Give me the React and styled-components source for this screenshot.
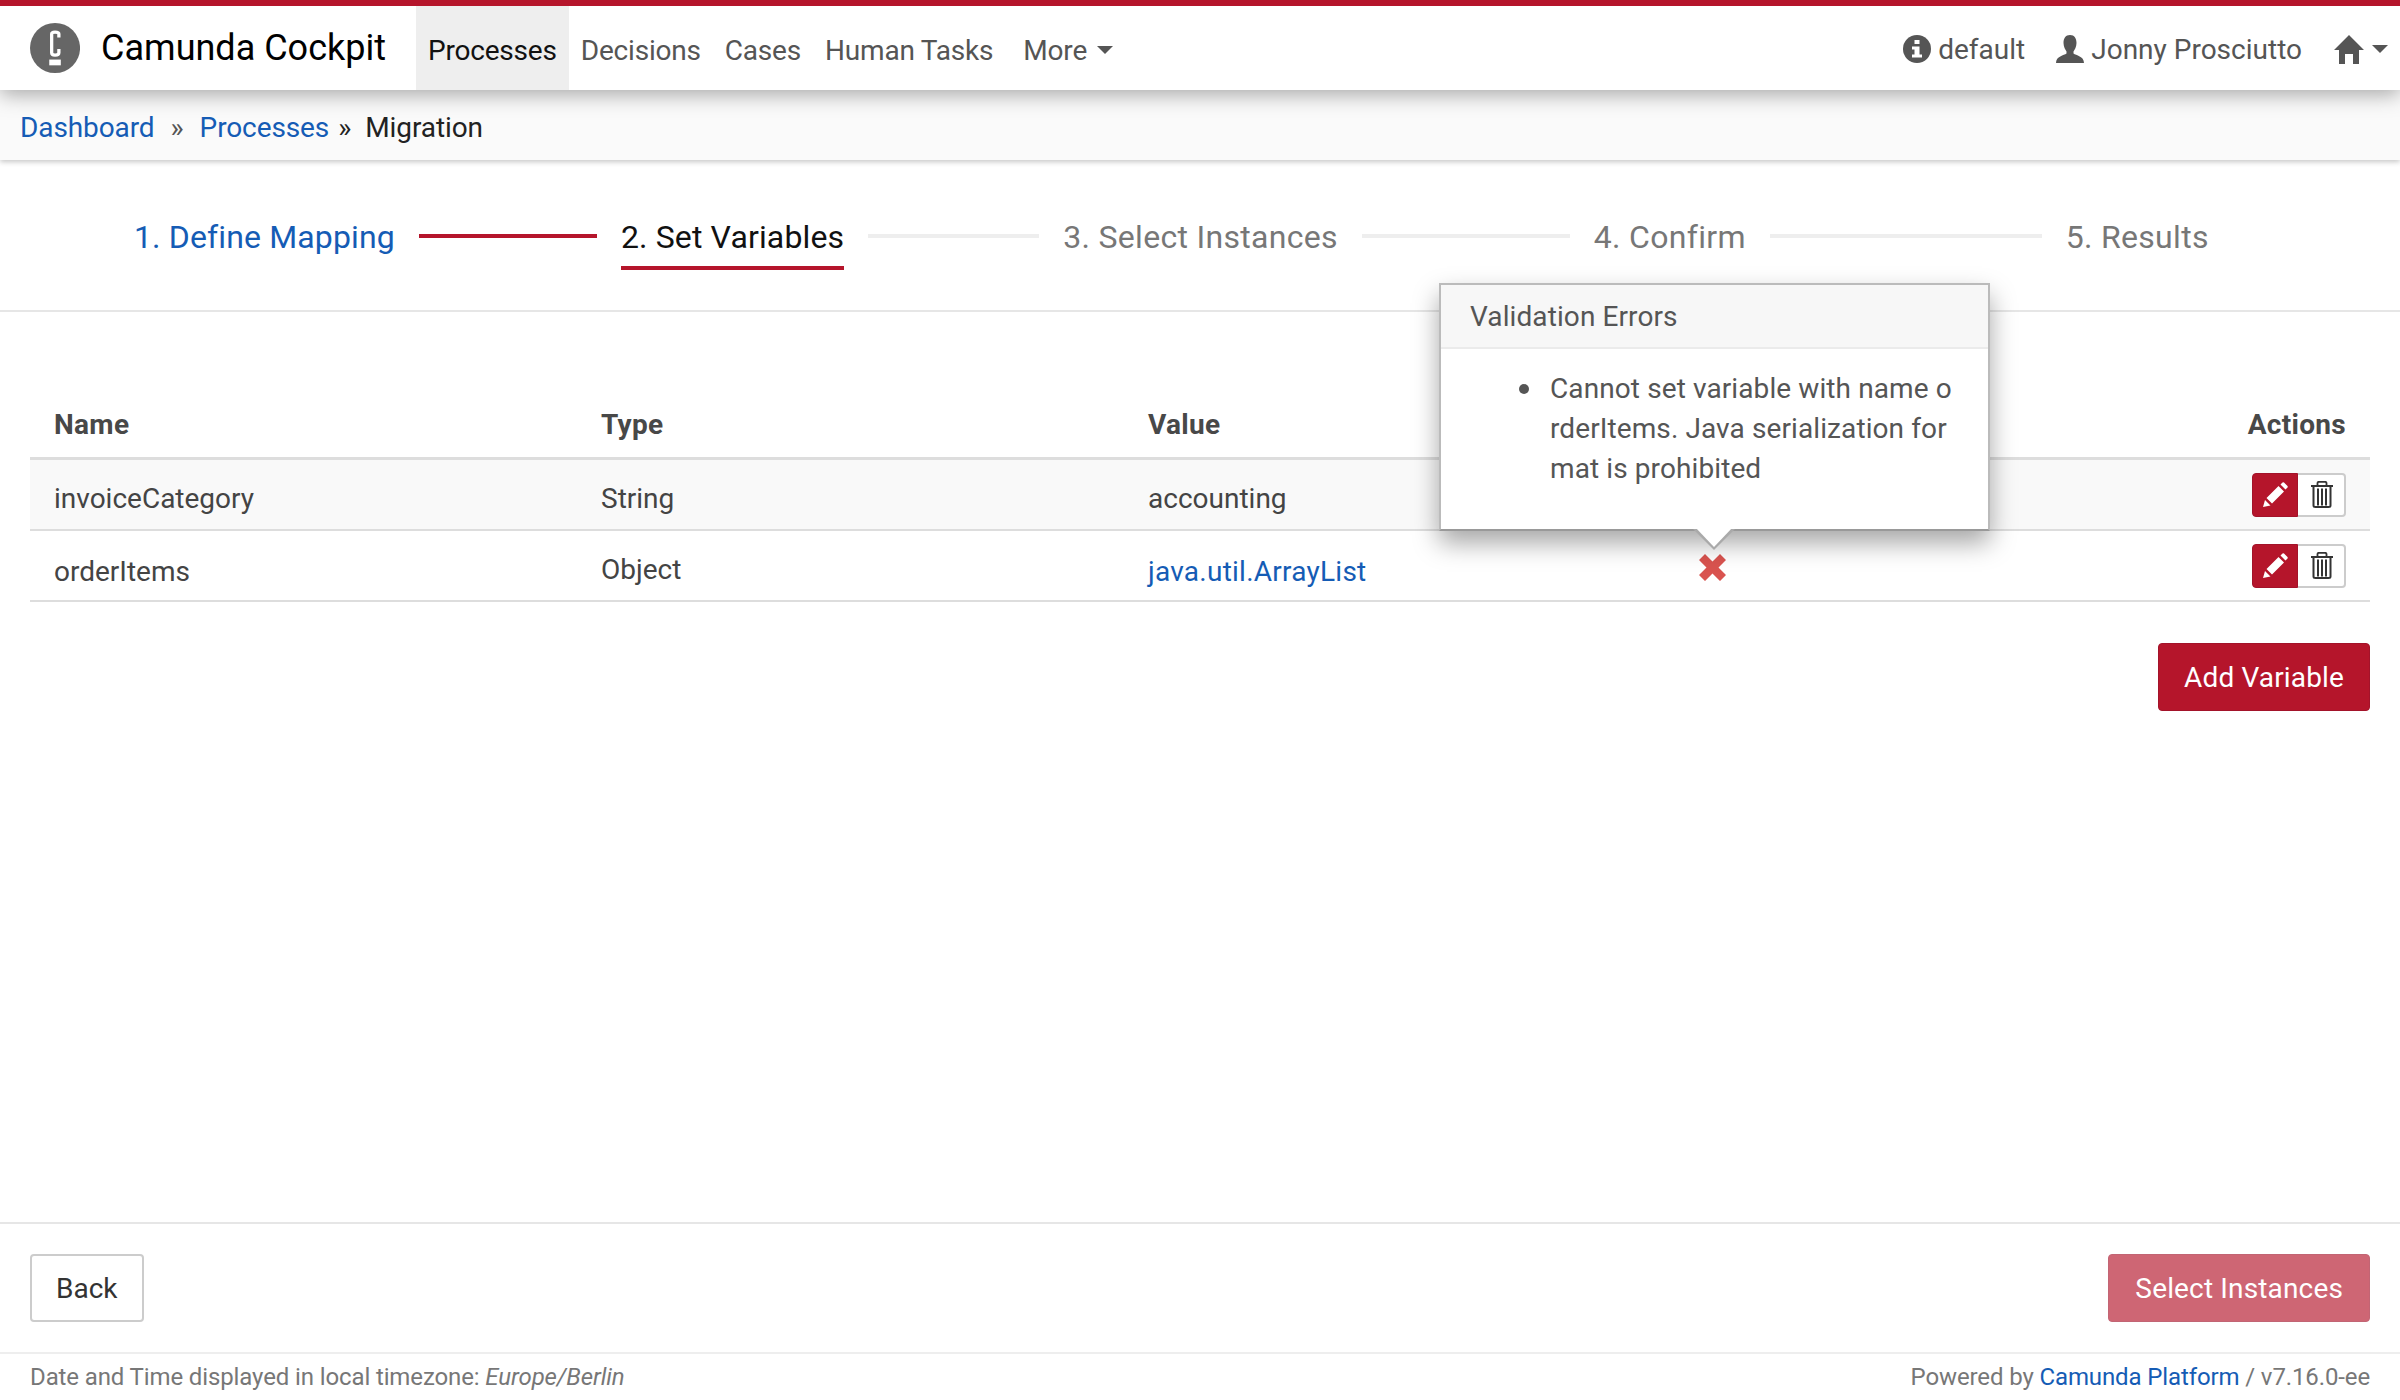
import React from "react";
import styled, { createGlobalStyle } from "styled-components";

const RED = "#b5152b";
const BLUE = "#155cb5";

const GlobalStyle = createGlobalStyle`
  html, body {
    margin: 0;
    padding: 0;
    background: #fff;
  }
  body {
    font-family: Roboto, "Liberation Sans", sans-serif;
    font-size: 28px;
    color: #444;
  }
`;

const Page = styled.div`
  height: 1400px;
  display: flex;
  flex-direction: column;
  overflow: hidden;
`;

const Header = styled.header`
  position: relative;
  z-index: 2;
  height: 84px;
  flex: none;
  display: flex;
  align-items: stretch;
  background: #fff;
  border-top: 6px solid ${RED};
  box-shadow: 0 4px 20px rgba(0, 0, 0, 0.35);
`;

const Brand = styled.div`
  display: flex;
  align-items: center;
  gap: 21px;
  box-sizing: border-box;
  padding-left: 30px;
  width: 386px;
  margin-right: 30px;
  font-size: 36px;
  color: #000;
  white-space: nowrap;
`;

const Nav = styled.nav`
  display: flex;
  align-items: stretch;
  letter-spacing: -0.2px;
`;

const NavItem = styled.a`
  display: flex;
  align-items: center;
  gap: 10px;
  padding: 4px 12px 0;
  color: ${(p) => (p.$active ? "#111" : "#555")};
  background: ${(p) => (p.$active ? "#eee" : "transparent")};
  margin-left: ${(p) => p.$gap || 0}px;
`;

const Caret = styled.span`
  display: inline-block;
  width: 0;
  height: 0;
  border-left: 8px solid transparent;
  border-right: 8px solid transparent;
  border-top: 8px solid #555;
`;

const UserMenu = styled.div`
  margin-left: auto;
  display: flex;
  align-items: center;
  padding: 2px 12px 0 0;
  color: #555;
`;

const UserItem = styled.span`
  display: flex;
  align-items: center;
  gap: ${(p) => p.$inner || 0}px;
  margin-left: ${(p) => p.$gap || 0}px;
`;

const Breadcrumb = styled.div`
  position: relative;
  z-index: 1;
  height: 70px;
  flex: none;
  box-sizing: border-box;
  display: flex;
  align-items: center;
  padding: 5px 0 0 20px;
  background: #fafafa;
  box-shadow: 0 2px 5px rgba(0, 0, 0, 0.22);
  color: #222;
  letter-spacing: -0.1px;
`;

const Crumb = styled.a`
  color: ${BLUE};
`;

const CrumbSep = styled.span`
  margin: 0 ${(p) => p.$right}px 0 ${(p) => p.$left}px;
  color: ${(p) => p.$color};
`;

const Wizard = styled.div`
  height: 152px;
  flex: none;
  box-sizing: border-box;
  display: flex;
  align-items: center;
  padding: 4px 0 0 134px;
  border-bottom: 2px solid #e6e6e6;
  font-size: 32px;
  letter-spacing: 0.14px;
`;

const Step = styled.span`
  position: relative;
  color: ${(p) => (p.$state === "done" ? BLUE : p.$state === "active" ? "#111" : "#777")};
  letter-spacing: ${(p) => (p.$state ? "0.14px" : "0.3px")};
  white-space: nowrap;
  ${(p) =>
    p.$state === "active" &&
    `&::after {
      content: "";
      position: absolute;
      left: 0;
      right: 0;
      bottom: -14px;
      height: 4px;
      background: ${RED};
    }`}
`;

const StepLine = styled.span`
  flex: none;
  width: ${(p) => p.$width}px;
  height: 4px;
  margin: -3px 24px 0;
  background: ${(p) => (p.$done ? RED : "#eee")};
`;

const Content = styled.main`
  position: relative;
  flex: 1;
  padding: 0 30px;
`;

const Row = styled.div`
  display: grid;
  grid-template-columns: 547px 547px 547px 1fr 152px;
  align-items: center;
  box-sizing: border-box;
  background: ${(p) => (p.$shade ? "#f9f9f9" : "transparent")};
`;

const HeadRow = styled(Row)`
  margin-top: 69px;
  height: 79px;
  padding-top: 11px;
  border-bottom: 3px solid #ddd;
`;

const BodyRow = styled(Row)`
  height: ${(p) => p.$height}px;
  padding-top: 8px;
  border-bottom: 2px solid #ddd;
`;

const HeadCell = styled.div`
  padding: 0 24px;
  font-weight: 700;
  letter-spacing: 0.3px;
  color: #484848;
  text-align: ${(p) => (p.$right ? "right" : "left")};
`;

const Cell = styled.div`
  padding: 0 24px;
  display: flex;
  transform: translateY(${(p) => p.$shift || 0}px);
`;

const Link = styled.a`
  color: ${BLUE};
`;

const ValueLink = styled(Link)`
  letter-spacing: 0.25px;
`;

const ActionCell = styled.div`
  display: flex;
  justify-content: flex-end;
  padding-right: 24px;
  transform: translateY(-4px);
`;

const EditButton = styled.span`
  display: flex;
  align-items: center;
  justify-content: center;
  width: 46px;
  height: 44px;
  box-sizing: border-box;
  background: ${RED};
  border: 1px solid #a3132a;
  border-radius: 4px 0 0 4px;
`;

const DeleteButton = styled.span`
  display: flex;
  align-items: center;
  justify-content: center;
  width: 48px;
  height: 44px;
  box-sizing: border-box;
  padding-left: 2px;
  background: #fff;
  border: 2px solid #ccc;
  border-left: none;
  border-radius: 0 4px 4px 0;
`;

const AddRow = styled.div`
  display: flex;
  justify-content: flex-end;
  margin-top: 41px;
`;

const PrimaryButton = styled.button`
  height: 68px;
  padding: 0 ${(p) => p.$pad}px;
  font: inherit;
  letter-spacing: 0.15px;
  color: #fff;
  background: ${RED};
  border: 1px solid #a3132a;
  border-radius: 4px;
  opacity: ${(p) => (p.disabled ? 0.65 : 1)};
`;

const Popover = styled.div`
  position: absolute;
  z-index: 3;
  left: 1439px;
  top: -29px;
  width: 551px;
  height: 248px;
  box-sizing: border-box;
  background: #fff;
  border: 2px solid #bbb;
  border-bottom-color: #999;
  box-shadow: 0 12px 24px rgba(0, 0, 0, 0.35);
  letter-spacing: 0.1px;

  &::before,
  &::after {
    content: "";
    position: absolute;
    width: 0;
    height: 0;
    border-style: solid;
    border-color: transparent;
    border-bottom-width: 0;
  }
  &::before {
    left: 252px;
    bottom: -21px;
    border-width: 21px 21px 0;
    border-top-color: #aaa;
  }
  &::after {
    left: 254px;
    bottom: -18px;
    border-width: 20px 19px 0;
    border-top-color: #fff;
  }
`;

const PopoverTitle = styled.div`
  height: 64px;
  box-sizing: border-box;
  display: flex;
  align-items: center;
  padding-left: 29px;
  background: #f7f7f7;
  border-bottom: 2px solid #ebebeb;
  color: #555;
`;

const PopoverList = styled.ul`
  margin: 0;
  padding: 20px 0 0 109px;
  list-style: none;
  line-height: 40px;
  color: #555;
  white-space: nowrap;
`;

const PopoverItem = styled.li`
  position: relative;

  &::before {
    content: "";
    position: absolute;
    left: -31px;
    top: 15px;
    width: 10px;
    height: 10px;
    border-radius: 50%;
    background: #555;
  }
`;

const FormFooter = styled.div`
  height: 130px;
  flex: none;
  box-sizing: border-box;
  display: flex;
  align-items: center;
  justify-content: space-between;
  padding: 0 30px;
  border-top: 2px solid #e6e6e6;
`;

const DefaultButton = styled.button`
  height: 68px;
  padding: 0 24px;
  font: inherit;
  color: #333;
  background: #fff;
  border: 2px solid #ccc;
  border-radius: 4px;
`;

const StatusBar = styled.footer`
  height: 48px;
  flex: none;
  box-sizing: border-box;
  display: flex;
  align-items: center;
  justify-content: space-between;
  padding: 0 30px;
  border-top: 2px solid #eee;
  font-size: 24px;
  letter-spacing: -0.12px;
  color: #777;
`;

const RemoveMark = styled.svg`
  margin-left: 4px;
`;

const Logo = () => (
  <svg width="52" height="52" viewBox="0 0 52 52">
    <circle cx="26" cy="26" r="26" fill="#666" />
    <path
      d="M30 15V11.500Q30 9.500 26 9.500Q22.500 9.500 22.500 11.500V31Q22.500 33.500 26 33.500Q30 33.500 30 31V27"
      fill="none"
      stroke="#fff"
      strokeWidth="3.4"
    />
    <rect x="20" y="38" width="12" height="6" fill="#fff" />
  </svg>
);

const InfoIcon = () => (
  <svg width="28" height="28" viewBox="0 0 28 28">
    <circle cx="14" cy="14" r="14" fill="#555" />
    <rect x="11.500" y="5" width="5" height="4" fill="#fff" />
    <path d="M9 11.500h7.500V19.500h2.500V22.500H9V19.500h2.500V14.500H9z" fill="#fff" />
  </svg>
);

const UserIcon = () => (
  <svg width="28" height="28" viewBox="0 0 28 28">
    <path
      d="M14 0C18.500 0 20.500 3.500 20.500 8C20.500 12 18.500 15 17.500 16.500V18.500C20 20.500 28 21 28 28H0C0 21 8 20.500 10.500 18.500V16.500C9.500 15 7.500 12 7.500 8C7.500 3.500 9.500 0 14 0Z"
      fill="#555"
    />
  </svg>
);

const HomeIcon = () => (
  <svg width="30" height="29" viewBox="0 0 30 29">
    <path d="M15 0L30 15H25V29H19V19H11V29H5V15H0Z" fill="#555" />
  </svg>
);

const PencilIcon = () => (
  <svg width="25" height="25" viewBox="0 0 25 25">
    <path
      d="M0 25L2 18L7.500 23.500ZM3.500 16L15.500 4L21 9.500L9 21.500ZM17.500 2.500L19.500 0.500Q20.500 0 21 0.500L24.500 4Q25 5 24.500 5.500L22.500 7.500Z"
      fill="#fff"
    />
  </svg>
);

const TrashIcon = () => (
  <svg width="22" height="27" viewBox="0 0 22 27" fill="none" stroke="#333">
    <path d="M0 5H22" strokeWidth="2" />
    <path d="M6.500 5V2Q6.500 0.800 8 0.800H14Q15.500 0.800 15.500 2V5" strokeWidth="1.800" />
    <path
      d="M2.500 6V24.500Q2.500 26 4.500 26H17.500Q19.500 26 19.500 24.500V6"
      strokeWidth="2"
    />
    <path d="M7 7.500V24.500M11 7.500V24.500M15 7.500V24.500" strokeWidth="2" />
  </svg>
);

const RemoveIcon = () => (
  <RemoveMark width="27" height="27" viewBox="0 0 27 27">
    <path
      d="M6 0L13.500 7.500L21 0L27 6L19.500 13.500L27 21L21 27L13.500 19.500L6 27L0 21L7.500 13.500L0 6Z"
      fill="#d9534f"
    />
  </RemoveMark>
);

export default function App() {
  return (
    <Page>
      <GlobalStyle />
      <Header>
        <Brand>
          <Logo />
          Camunda Cockpit
        </Brand>
        <Nav>
          <NavItem $active>Processes</NavItem>
          <NavItem>Decisions</NavItem>
          <NavItem>Cases</NavItem>
          <NavItem>Human Tasks</NavItem>
          <NavItem $gap={6}>
            More <Caret />
          </NavItem>
        </Nav>
        <UserMenu>
          <UserItem $inner={7}>
            <InfoIcon /> default
          </UserItem>
          <UserItem $gap={31} $inner={7}>
            <UserIcon /> Jonny Prosciutto
          </UserItem>
          <UserItem $gap={32} $inner={8}>
            <HomeIcon /> <Caret />
          </UserItem>
        </UserMenu>
      </Header>
      <Breadcrumb>
        <Crumb>Dashboard</Crumb>
        <CrumbSep $left={16} $right={16} $color="#555">»</CrumbSep>
        <Crumb>Processes</Crumb>
        <CrumbSep $left={9} $right={14} $color="#222">»</CrumbSep>
        Migration
      </Breadcrumb>
      <Wizard>
        <Step $state="done">1. Define Mapping</Step>
        <StepLine $width={178} $done />
        <Step $state="active">2. Set Variables</Step>
        <StepLine $width={171} />
        <Step>3. Select Instances</Step>
        <StepLine $width={208} />
        <Step>4. Confirm</Step>
        <StepLine $width={272} />
        <Step>5. Results</Step>
      </Wizard>
      <Content>
        <HeadRow>
          <HeadCell>Name</HeadCell>
          <HeadCell>Type</HeadCell>
          <HeadCell>Value</HeadCell>
          <HeadCell />
          <HeadCell $right>Actions</HeadCell>
        </HeadRow>
        <BodyRow $shade $height={71}>
          <Cell>invoiceCategory</Cell>
          <Cell>String</Cell>
          <Cell>accounting</Cell>
          <Cell />
          <ActionCell>
            <EditButton><PencilIcon /></EditButton>
            <DeleteButton><TrashIcon /></DeleteButton>
          </ActionCell>
        </BodyRow>
        <BodyRow $height={71}>
          <Cell $shift={2}>orderItems</Cell>
          <Cell>Object</Cell>
          <Cell $shift={2}><ValueLink>java.util.ArrayList</ValueLink></Cell>
          <Cell $shift={-2}><RemoveIcon /></Cell>
          <ActionCell>
            <EditButton><PencilIcon /></EditButton>
            <DeleteButton><TrashIcon /></DeleteButton>
          </ActionCell>
        </BodyRow>
        <AddRow>
          <PrimaryButton $pad={25}>Add Variable</PrimaryButton>
        </AddRow>
        <Popover>
          <PopoverTitle>Validation Errors</PopoverTitle>
          <PopoverList>
            <PopoverItem>
              Cannot set variable with name o<br />
              rderItems. Java serialization for<br />
              mat is prohibited
            </PopoverItem>
          </PopoverList>
        </Popover>
      </Content>
      <FormFooter>
        <DefaultButton>Back</DefaultButton>
        <PrimaryButton disabled $pad={26}>Select Instances</PrimaryButton>
      </FormFooter>
      <StatusBar>
        <span>
          Date and Time displayed in local timezone: <em>Europe/Berlin</em>
        </span>
        <span>
          Powered by <Link>Camunda Platform</Link> / v7.16.0-ee
        </span>
      </StatusBar>
    </Page>
  );
}
